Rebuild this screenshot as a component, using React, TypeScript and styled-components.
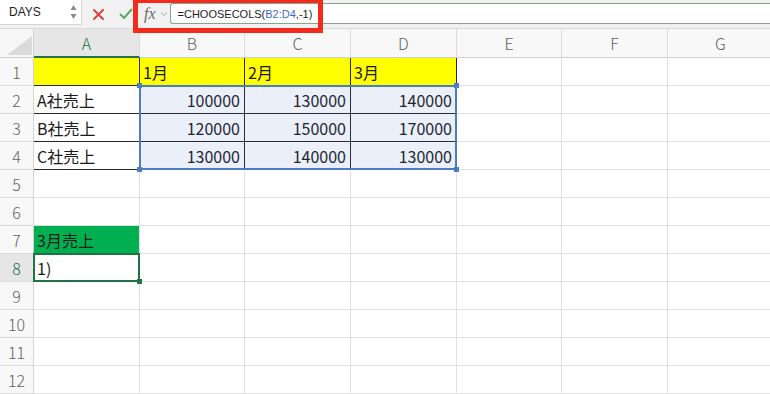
import React from 'react';
import styled, { createGlobalStyle, css } from 'styled-components';

const GlobalStyle = createGlobalStyle`
  html, body {
    margin: 0;
    padding: 0;
    background: #ffffff;
  }
  body {
    font-family: "Liberation Sans", "Noto Sans CJK JP", sans-serif;
    overflow: hidden;
  }
`;

const GREEN = '#217346';
const BLUE = '#4a7dc4';
const GRID = '#e1e1e1';
const DARK = '#262626';

const Window = styled.div`
  position: relative;
  width: 770px;
  height: 394px;
  overflow: hidden;
  background: #ffffff;
`;

// ---------- formula bar ----------

const Toolbar = styled.div`
  display: flex;
  align-items: flex-start;
  height: 29px;
  box-sizing: border-box;
  background: #f1f1f1;
  border-bottom: 1px solid #d9d9d9;
`;

const NameBox = styled.div`
  display: flex;
  align-items: center;
  justify-content: space-between;
  width: 82px;
  height: 25px;
  box-sizing: border-box;
  padding: 0 4px 0 9px;
  background: #ffffff;
  border-right: 1px solid #d6d6d6;
  border-bottom: 1px solid #d6d6d6;
  font-size: 12px;
  color: #222;
`;

const ToolIcon = styled.span<{ $gap: number }>`
  display: flex;
  align-items: center;
  height: 28px;
  margin-left: ${(p) => p.$gap}px;
`;

const FxLabel = styled.span`
  display: flex;
  align-items: center;
  height: 28px;
  margin-left: 11px;
  font-family: "Liberation Serif", "DejaVu Serif", serif;
  font-style: italic;
  font-size: 16px;
  color: #6a6a6a;
`;

const FormulaInput = styled.div`
  flex: 1;
  display: flex;
  align-items: center;
  height: 21px;
  margin-top: 3px;
  margin-left: 2px;
  box-sizing: border-box;
  padding-left: 7px;
  background: #ffffff;
  border: 1px solid #80a88e;
  border-right: none;
  border-radius: 3px 0 0 3px;
  font-size: 11px;
  color: #1d1d1d;
  white-space: nowrap;
`;

const RefText = styled.span`
  color: #3b6fc6;
`;

const Highlight = styled.div`
  position: absolute;
  left: 133px;
  top: -2px;
  width: 190px;
  height: 35px;
  box-sizing: border-box;
  border: 5px solid #f42b1c;
  pointer-events: none;
`;

// ---------- sheet ----------

const Sheet = styled.div`
  display: grid;
  grid-template-columns: 34px 106px 105px 106px 106px 105px 106px 106px;
  grid-template-rows: 29px repeat(12, 28px);
`;

type Place = { $row: number; $col: number };

const placed = css<Place>`
  grid-row: ${(p) => p.$row};
  grid-column: ${(p) => p.$col};
`;

const Corner = styled.div`
  position: relative;
  grid-row: 1;
  grid-column: 1;
  box-sizing: border-box;
  background: #f6f6f6;
  border-right: 1px solid #d3d3d3;
  border-bottom: 1px solid #cfcfcf;
`;

const CornerTriangle = styled.svg`
  position: absolute;
  left: 7px;
  top: 7px;
`;

const ColHeader = styled.div<Place & { $active?: boolean }>`
  ${placed}
  display: flex;
  align-items: center;
  justify-content: center;
  box-sizing: border-box;
  background: ${(p) => (p.$active ? '#e6e6e6' : '#f8f8f8')};
  border-right: 1px solid #dcdcdc;
  border-bottom: ${(p) => (p.$active ? `2px solid ${GREEN}` : '1px solid #cfcfcf')};
  font-family: "Noto Sans CJK JP", sans-serif;
  font-size: 16px;
  font-weight: 300;
  color: ${(p) => (p.$active ? GREEN : '#626262')};
`;

const RowHeader = styled.div<Place & { $active?: boolean }>`
  ${placed}
  display: flex;
  align-items: center;
  justify-content: center;
  box-sizing: border-box;
  background: ${(p) => (p.$active ? '#e6e6e6' : '#f8f8f8')};
  border-right: 1px solid #d3d3d3;
  border-bottom: 1px solid #dcdcdc;
  font-family: "Noto Sans CJK JP", sans-serif;
  font-size: 16px;
  font-weight: 300;
  color: ${(p) => (p.$active ? GREEN : '#626262')};
`;

const Cell = styled.div<Place & { $fill?: string; $right?: boolean; $boxed?: boolean }>`
  ${placed}
  display: flex;
  align-items: center;
  justify-content: ${(p) => (p.$right ? 'flex-end' : 'flex-start')};
  box-sizing: border-box;
  padding: 1px 4px 0 3px;
  background: ${(p) => p.$fill || '#ffffff'};
  border-right: 1px solid ${GRID};
  border-bottom: 1px solid ${GRID};
  font-family: "Noto Sans CJK JP", sans-serif;
  font-size: 16px;
  color: #1a1a1a;
  white-space: nowrap;
  overflow: hidden;

  ${(p) =>
    p.$boxed &&
    css`
      border-right-color: ${DARK};
      border-bottom-color: ${DARK};
    `}
`;

const RangeSelection = styled.div`
  position: relative;
  grid-column: 3 / 6;
  grid-row: 3 / 6;
  margin: -1px 0 0 -1px;
  border: 2px solid ${BLUE};
  background: rgba(60, 105, 205, 0.11);
  pointer-events: none;
`;

const Handle = styled.span<{ $x: 'left' | 'right'; $y: 'top' | 'bottom'; $color: string }>`
  position: absolute;
  width: 5px;
  height: 5px;
  background: ${(p) => p.$color};
  ${(p) => (p.$x === 'left' ? 'left: -4px;' : 'right: -4px;')}
  ${(p) => (p.$y === 'top' ? 'top: -4px;' : 'bottom: -4px;')}
`;

const ActiveCell = styled.div`
  position: relative;
  grid-column: 2 / 3;
  grid-row: 9 / 10;
  margin: -1px 0 0 -1px;
  border: 2px solid ${GREEN};
  pointer-events: none;
`;

const CancelIcon = () => (
  <svg width="13" height="13" viewBox="0 0 13 13">
    <path d="M2 2 L11 11 M11 2 L2 11" stroke="#d9453d" strokeWidth="2" strokeLinecap="round" />
  </svg>
);

const CheckIcon = () => (
  <svg width="14" height="12" viewBox="0 0 14 12">
    <path d="M1.5 6.5 L5 10 L12.5 1.5" fill="none" stroke="#5aaa5e" strokeWidth="2" strokeLinecap="round" strokeLinejoin="round" />
  </svg>
);

const Spinner = () => (
  <svg width="7" height="16" viewBox="0 0 7 16">
    <path d="M0.5 6 L3.5 1 L6.5 6 Z" fill="#8a8a8a" />
    <path d="M0.5 10 L3.5 15 L6.5 10 Z" fill="#8a8a8a" />
  </svg>
);

const Chevron = () => (
  <svg width="8" height="6" viewBox="0 0 8 6">
    <path d="M1 1.5 L4 4.5 L7 1.5" fill="none" stroke="#c2c2c2" strokeWidth="1.2" />
  </svg>
);

const columns = ['A', 'B', 'C', 'D', 'E', 'F', 'G'];

type CellData = { text?: string; fill?: string; right?: boolean; boxed?: boolean };

const YELLOW = '#ffff00';

const data: Record<number, CellData[]> = {
  1: [
    { fill: YELLOW, boxed: true },
    { text: '1月', fill: YELLOW, boxed: true },
    { text: '2月', fill: YELLOW, boxed: true },
    { text: '3月', fill: YELLOW, boxed: true },
  ],
  2: [
    { text: 'A社売上', boxed: true },
    { text: '100000', right: true, boxed: true },
    { text: '130000', right: true, boxed: true },
    { text: '140000', right: true, boxed: true },
  ],
  3: [
    { text: 'B社売上', boxed: true },
    { text: '120000', right: true, boxed: true },
    { text: '150000', right: true, boxed: true },
    { text: '170000', right: true, boxed: true },
  ],
  4: [
    { text: 'C社売上', boxed: true },
    { text: '130000', right: true, boxed: true },
    { text: '140000', right: true, boxed: true },
    { text: '130000', right: true, boxed: true },
  ],
  7: [{ text: '3月売上', fill: '#00b050' }],
  8: [{ text: '1)' }],
};

const rows = Array.from({ length: 12 }, (_, i) => i + 1);

const App = () => {
  return (
    <Window>
      <GlobalStyle />
      <Toolbar>
        <NameBox>
          DAYS
          <Spinner />
        </NameBox>
        <ToolIcon $gap={10}>
          <CancelIcon />
        </ToolIcon>
        <ToolIcon $gap={14}>
          <CheckIcon />
        </ToolIcon>
        <FxLabel>fx</FxLabel>
        <ToolIcon $gap={4}>
          <Chevron />
        </ToolIcon>
        <FormulaInput>
          =CHOOSECOLS(<RefText>B2:D4</RefText>,-1)
        </FormulaInput>
      </Toolbar>

      <Sheet>
        <Corner>
          <CornerTriangle width="25" height="19" viewBox="0 0 25 19">
            <path d="M25 0 L25 19 L0 19 Z" fill="#dadada" />
          </CornerTriangle>
        </Corner>
        {columns.map((c, ci) => (
          <ColHeader key={c} $row={1} $col={ci + 2} $active={c === 'A'}>
            {c}
          </ColHeader>
        ))}

        {rows.map((r) => (
          <React.Fragment key={r}>
            <RowHeader $row={r + 1} $col={1} $active={r === 8}>
              {r}
            </RowHeader>
            {columns.map((c, ci) => {
              const cell = data[r]?.[ci] || {};
              return (
                <Cell
                  key={c}
                  $row={r + 1}
                  $col={ci + 2}
                  $fill={cell.fill}
                  $right={cell.right}
                  $boxed={cell.boxed}
                >
                  {cell.text}
                </Cell>
              );
            })}
          </React.Fragment>
        ))}

        <RangeSelection>
          <Handle $x="left" $y="top" $color={BLUE} />
          <Handle $x="right" $y="top" $color={BLUE} />
          <Handle $x="left" $y="bottom" $color={BLUE} />
          <Handle $x="right" $y="bottom" $color={BLUE} />
        </RangeSelection>

        <ActiveCell>
          <Handle $x="right" $y="bottom" $color={GREEN} />
        </ActiveCell>
      </Sheet>

      <Highlight />
    </Window>
  );
};

export default App;
